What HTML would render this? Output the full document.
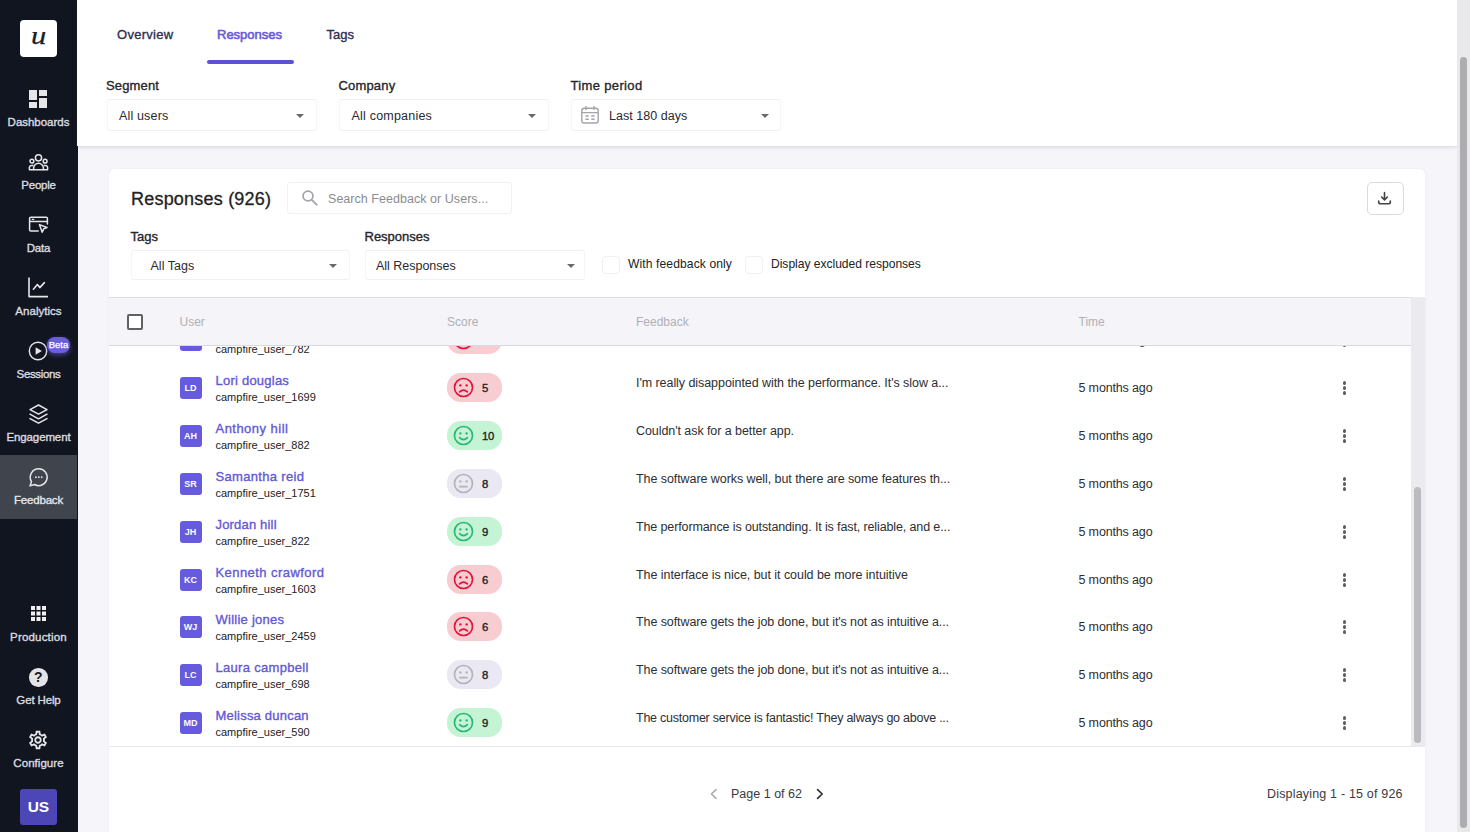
<!DOCTYPE html>
<html lang="en">
<head>
<meta charset="utf-8">
<title>Feedback - Responses</title>
<style>
*{box-sizing:border-box;margin:0;padding:0}
html,body{width:1470px;height:832px;overflow:hidden}
body{font-family:"Liberation Sans",sans-serif;background:#f5f5fa;color:#222;position:relative}
.abs{position:absolute}
/* ---------- sidebar ---------- */
#side{position:absolute;left:0;top:0;width:77.5px;height:832px;background:#10151f}
#logo{position:absolute;left:20px;top:20px;width:37px;height:37px;background:#fff;border-radius:4px}
#logo span{position:absolute;left:0;top:-3.5px;width:37px;text-align:center;font-family:"Liberation Serif",serif;font-style:italic;font-size:25px;color:#1a1d2b;-webkit-text-stroke:.25px #1a1d2b;line-height:37px;transform:scaleX(1.22)}
.nav{position:absolute;left:0;width:77px;text-align:center;color:#dcdce0;font-size:11.5px;-webkit-text-stroke:.35px #dcdce0;letter-spacing:0px;line-height:14px;white-space:nowrap}
.ico{position:absolute}
#active{position:absolute;left:0;top:455px;width:77px;height:64px;background:#3f444d}
#beta{position:absolute;left:47px;top:336.5px;width:23px;height:16px;border-radius:8px;background:#6a5fd9;color:#fff;font-size:9.5px;-webkit-text-stroke:.25px #fff;line-height:16px;text-align:center;box-shadow:0 2px 5px rgba(106,95,217,.6)}
#usr{position:absolute;left:20px;top:789px;width:36.5px;height:36px;border-radius:3px;background:#4c46b6;color:#fff;font-weight:bold;font-size:15.5px;line-height:36px;text-align:center;letter-spacing:-.3px}
/* ---------- top header ---------- */
#top{position:absolute;left:77px;top:0;width:1380px;height:146px;background:#fff;box-shadow:0 1px 4px rgba(60,60,90,.18)}
.tab{position:absolute;top:27px;font-size:13px;line-height:16px;color:#2c3050;-webkit-text-stroke:.35px #2c3050;white-space:nowrap}
.tab.on{color:#685dd8;-webkit-text-stroke:.6px #685dd8}
#ul{position:absolute;left:207px;top:60px;width:87px;height:4px;border-radius:2px;background:#5b50d6}
.lbl{position:absolute;font-size:13px;line-height:16px;color:#26262b;-webkit-text-stroke:.35px #26262b;white-space:nowrap}
.sel{position:absolute;height:32px;border:1px solid #f0f0f5;border-left-color:#f5f5f9;border-right-color:#f5f5f9;border-radius:3px;background:#fff}
.sel>span{position:absolute;top:8px;font-size:12.5px;line-height:16px;color:#2a2a2e;white-space:nowrap}
.sel b{position:absolute;top:14px;width:0;height:0;border-left:4.2px solid transparent;border-right:4.2px solid transparent;border-top:4.6px solid #6a6a6e}
/* ---------- scrollbars ---------- */
#psb{position:absolute;left:1457px;top:0;width:13px;height:832px;background:#e9e9ec}
#psb i{position:absolute;left:3px;top:57px;width:7px;height:771px;border-radius:4px;background:#adadb1}
/* ---------- card ---------- */
#card{position:absolute;left:109px;top:169px;width:1316px;height:680px;background:#fff;border-radius:6px;box-shadow:0 0 3px rgba(60,60,90,.06)}
#h1{position:absolute;left:131px;top:187px;font-size:18px;line-height:24px;color:#222;-webkit-text-stroke:.3px #222;white-space:nowrap}
#srch{position:absolute;left:287px;top:182px;width:225px;height:32px;border:1px solid #f1f1f6;border-radius:3px}
#srch>span{position:absolute;left:40px;top:8px;font-size:12.5px;line-height:16px;color:#8c8c90;white-space:nowrap}
#dl{position:absolute;left:1367px;top:182px;width:37px;height:33px;border:1px solid #d9dbe4;border-radius:5px;background:#fff}
.cb{position:absolute;top:255.5px;width:18px;height:18px;border:1px solid #efeff4;border-radius:4px;background:#fff}
.cbl{position:absolute;top:256px;font-size:12.1px;line-height:16px;color:#222;white-space:nowrap}
/* ---------- table ---------- */
#thead{position:absolute;left:109px;top:297px;width:1302px;height:49px;background:#f4f4f9;border-top:1px solid #dcdce6;border-bottom:1px solid #d9d9e2;z-index:3}
#thead>span{position:absolute;top:16px;font-size:12px;line-height:16px;color:#b0b0b6;white-space:nowrap}
#hcb{position:absolute;left:17.5px;top:16px;width:16px;height:16px;border:2px solid #606065;border-radius:2px;background:#fff}
#tsb{position:absolute;left:1411px;top:297px;width:14px;height:450px;background:#ebebef;z-index:3}
#tsb i{position:absolute;left:3px;top:190px;width:7px;height:256px;border-radius:4px;background:#bbbbbf}
#tbody{position:absolute;left:0;top:345px;width:1411px;height:402px;overflow:hidden}
#rows{position:absolute;left:0;top:-345px;width:1411px}
.row{position:absolute;left:0;width:1411px;height:48px}
.av{position:absolute;left:179.5px;top:13px;width:22px;height:22px;border-radius:3px;background:#655bdc;color:#fff;font-size:9px;font-weight:bold;line-height:22px;text-align:center}
.nm{position:absolute;left:215.5px;top:9px;font-size:13px;line-height:16px;color:#6358d4;-webkit-text-stroke:.35px #6358d4;white-space:nowrap}
.sub{position:absolute;left:215.5px;top:26px;font-size:11px;line-height:14px;color:#222;white-space:nowrap}
.pill{position:absolute;left:447px;top:8.6px;width:55.2px;height:29.7px;border-radius:13.5px}
.pill.red{background:#f8cdd1}.pill.green{background:#c4f4d3}.pill.gray{background:#e9e8f3}
.pill .face{position:absolute;left:6px;top:4.2px;width:21px;height:21px}
.pill>span{position:absolute;left:35px;top:8.6px;font-size:11.3px;line-height:15px;color:#222;-webkit-text-stroke:.35px #222;letter-spacing:-.3px}
.fb{position:absolute;left:636px;top:10.5px;font-size:12.5px;line-height:16px;color:#2e2e32;white-space:nowrap}
.tm{position:absolute;left:1078.5px;top:16px;font-size:12.5px;line-height:16px;color:#2e2e32;white-space:nowrap}
.kb{position:absolute;left:1342.7px;top:17px;width:4px}
.kb i{display:block;width:3.6px;height:3.6px;border-radius:50%;background:#606064;margin-bottom:1.6px}
#tfoot{position:absolute;left:109px;top:746px;width:1302px;height:1px;background:#e6e6ee}
.pg{position:absolute;top:786px;font-size:12.5px;line-height:16px;color:#3a3a3e;white-space:nowrap}
</style>
</head>
<body>

<!-- ================= SIDEBAR ================= -->
<div id="side">
  <div id="logo"><span>u</span></div>
  <div id="active"></div>

  <!-- Dashboards -->
  <svg class="ico" style="left:26px;top:87px" width="24" height="24" viewBox="0 0 24 24"><path fill="#e6e6ea" d="M3 13h8V3H3v10zm0 8h8v-6H3v6zm10 0h8V11h-8v10zm0-18v6h8V3h-8z"/></svg>
  <div class="nav" style="top:115px"><span style="letter-spacing:-0.02px">Dashboards</span></div>

  <!-- People -->
  <svg class="ico" style="left:28px;top:153px" width="21" height="19" viewBox="0 0 21 19" fill="none" stroke="#e6e6ea" stroke-width="1.5" stroke-linejoin="round"><circle cx="10.5" cy="4.8" r="3.1"/><circle cx="3.9" cy="8.2" r="1.9"/><circle cx="17.1" cy="8.2" r="1.9"/><path d="M5.6 16.8v-1.6a4.9 4.9 0 0 1 9.8 0v1.6z"/><path d="M5.4 12.4H3.6a2.2 2.2 0 0 0-2.2 2.2v2.2h4.2M15.6 12.4h1.8a2.2 2.2 0 0 1 2.2 2.2v2.2h-4.2"/></svg>
  <div class="nav" style="top:178px"><span style="letter-spacing:-0.22px">People</span></div>

  <!-- Data -->
  <svg class="ico" style="left:28px;top:215px" width="21" height="20" viewBox="0 0 21 20" fill="none" stroke="#e6e6ea" stroke-width="1.5" stroke-linejoin="round" stroke-linecap="round"><path d="M10.2 16H2.8a1.2 1.2 0 0 1-1.2-1.2V3.4a1.2 1.2 0 0 1 1.2-1.2h15.4a1.2 1.2 0 0 1 1.2 1.2V9"/><path d="M1.6 6.4h17.8"/><path d="M4.2 4.3h1.6" stroke-width="1.3"/><path d="M11.4 9.6l7.6 2.9-3.3 1.4-1.5 3.3z"/></svg>
  <div class="nav" style="top:241px"><span style="letter-spacing:-0.17px">Data</span></div>

  <!-- Analytics -->
  <svg class="ico" style="left:27px;top:276px" width="23" height="23" viewBox="0 0 23 23" fill="none" stroke="#e6e6ea" stroke-width="1.6" stroke-linejoin="round" stroke-linecap="round"><path d="M2 1.6v19h19" stroke-linecap="butt"/><path d="M6.4 13.2l4-4.6 2.4 3 4.6-5"/></svg>
  <div class="nav" style="top:304px"><span style="letter-spacing:0.03px">Analytics</span></div>

  <!-- Sessions -->
  <svg class="ico" style="left:28px;top:341px" width="20" height="20" viewBox="0 0 20 20"><circle cx="10" cy="10" r="8.7" fill="none" stroke="#e6e6ea" stroke-width="1.4"/><path d="M7.6 6.2v7.6l6.3-3.8z" fill="#e6e6ea"/></svg>
  <div id="beta">Beta</div>
  <div class="nav" style="top:367px"><span style="letter-spacing:-0.36px">Sessions</span></div>

  <!-- Engagement -->
  <svg class="ico" style="left:28px;top:403px" width="21" height="22" viewBox="0 0 21 22" fill="none" stroke="#e6e6ea" stroke-width="1.5" stroke-linejoin="round" stroke-linecap="round"><path d="M10.5 2L19 6.6l-8.500 4.600L2 6.600z"/><path d="M2 11.200l8.500 4.600 8.500-4.600"/><path d="M2 15.600l8.500 4.600 8.500-4.600"/></svg>
  <div class="nav" style="top:430px"><span style="letter-spacing:-0.12px">Engagement</span></div>

  <!-- Feedback -->
  <svg class="ico" style="left:28px;top:467px" width="21" height="21" viewBox="0 0 21 21" fill="none" stroke="#e6e6ea" stroke-width="1.5" stroke-linejoin="round" stroke-linecap="round"><path d="M10.8 1.8a8.400 8.400 0 1 1-4.200 15.700L2 18.900l1.500-4.300A8.400 8.400 0 0 1 10.800 1.800z"/><g fill="#e6e6ea" stroke="none"><circle cx="7.900" cy="10.200" r=".9"/><circle cx="10.800" cy="10.200" r=".9"/><circle cx="13.700" cy="10.200" r=".9"/></g></svg>
  <div class="nav" style="top:493px;color:#f4f4f6;letter-spacing:-.2px">Feedback</div>

  <!-- Production -->
  <svg class="ico" style="left:30.800px;top:606px" width="15" height="15" viewBox="0 0 15 15" fill="#f0f0f3"><rect x="0" y="0" width="4" height="4"/><rect x="5.500" y="0" width="4" height="4"/><rect x="11" y="0" width="4" height="4"/><rect x="0" y="5.500" width="4" height="4"/><rect x="5.500" y="5.500" width="4" height="4"/><rect x="11" y="5.500" width="4" height="4"/><rect x="0" y="11" width="4" height="4"/><rect x="5.500" y="11" width="4" height="4"/><rect x="11" y="11" width="4" height="4"/></svg>
  <div class="nav" style="top:630px"><span style="letter-spacing:0.19px">Production</span></div>

  <!-- Get Help -->
  <div class="ico" style="left:29px;top:668px;width:18.500px;height:18.500px;border-radius:50%;background:#e4e4e8;color:#161a25;font-weight:bold;font-size:14px;line-height:19px;text-align:center">?</div>
  <div class="nav" style="top:693px"><span style="letter-spacing:-0.14px">Get Help</span></div>

  <!-- Configure -->
  <svg class="ico" style="left:27.2px;top:729px" width="22" height="22" viewBox="0 0 24 24"><path fill="#e6e6ea" d="M19.430 12.980c.040-.320.070-.640.070-.980s-.030-.660-.070-.980l2.110-1.650c.190-.150.240-.420.120-.640l-2-3.460c-.090-.160-.260-.250-.440-.250-.060 0-.120.010-.170.030l-2.490 1c-.520-.400-1.080-.730-1.690-.980l-.380-2.650C14.460 2.180 14.250 2 14 2h-4c-.250 0-.460.180-.490.420l-.380 2.650c-.610.250-1.170.590-1.690.980l-2.490-1c-.060-.020-.120-.030-.180-.030-.170 0-.340.090-.430.250l-2 3.460c-.130.220-.070.490.12.640l2.110 1.650c-.040.320-.070.650-.070.980s.030.660.070.980l-2.110 1.650c-.190.150-.240.420-.120.640l2 3.460c.090.160.260.250.440.250.060 0 .12-.010.170-.030l2.490-1c.520.400 1.080.730 1.690.980l.380 2.650c.030.240.240.420.490.420h4c.250 0 .460-.180.490-.420l.380-2.650c.610-.250 1.170-.590 1.690-.980l2.490 1c.060.020.120.030.180.030.170 0 .340-.090.430-.250l2-3.460c.120-.220.070-.490-.12-.640l-2.110-1.650zm-1.980-1.710c.040.310.050.520.050.730 0 .210-.020.430-.050.730l-.140 1.130.890.700 1.080.840-.700 1.210-1.270-.510-1.040-.420-.900.680c-.430.320-.840.560-1.250.730l-1.060.430-.160 1.130-.200 1.350h-1.400l-.190-1.350-.160-1.130-1.060-.430c-.430-.180-.830-.410-1.230-.710l-.910-.700-1.060.430-1.270.510-.700-1.210 1.080-.840.890-.700-.140-1.130c-.030-.310-.050-.540-.050-.740s.020-.430.050-.730l.140-1.130-.890-.700-1.080-.840.700-1.210 1.270.510 1.040.420.900-.680c.430-.320.840-.560 1.250-.730l1.060-.430.160-1.130.200-1.350h1.390l.190 1.350.160 1.130 1.060.430c.430.180.830.410 1.230.710l.910.700 1.060-.430 1.270-.510.700 1.210-1.070.850-.890.700.140 1.130zM12 8c-2.210 0-4 1.790-4 4s1.790 4 4 4 4-1.790 4-4-1.790-4-4-4zm0 6c-1.100 0-2-.900-2-2s.900-2 2-2 2 .900 2 2-.900 2-2 2z"/></svg>
  <div class="nav" style="top:756px"><span style="letter-spacing:0.05px">Configure</span></div>

  <div id="usr">US</div>
</div>

<!-- ================= TOP HEADER ================= -->
<div id="top"></div>
<div class="tab" style="left:117px"><span style="letter-spacing:0.28px">Overview</span></div>
<div class="tab on" style="left:217px">Responses</div>
<div class="tab" style="left:326.500px">Tags</div>
<div id="ul"></div>

<div class="lbl" style="left:106px;top:78px"><span style="letter-spacing:0.15px">Segment</span></div>
<div class="lbl" style="left:338.500px;top:78px"><span style="letter-spacing:0.17px">Company</span></div>
<div class="lbl" style="left:570.500px;top:78px"><span style="letter-spacing:0.35px">Time period</span></div>

<div class="sel" style="left:107px;top:99px;width:210px"><span style="left:11px"><span style="letter-spacing:0.16px">All users</span></span><b style="left:188px"></b></div>
<div class="sel" style="left:338.500px;top:99px;width:210px"><span style="left:12px"><span style="letter-spacing:0.21px">All companies</span></span><b style="left:188.500px"></b></div>
<div class="sel" style="left:570.500px;top:99px;width:210px"><svg class="abs" style="left:8.7px;top:5.4px" width="20" height="20" viewBox="0 0 20 20" fill="none" stroke="#a4a4aa" stroke-width="1.4" stroke-linecap="round"><rect x="1.800" y="3.200" width="16.400" height="14.800" rx="2.600"/><path d="M1.800 7.600h16.400M6 1.400v3.200M14 1.400v3.200"/><path d="M6 11h2.200M11.800 11H14M6 14.200h2.200M11.800 14.200H14" stroke-width="1.500"/></svg><span style="left:37.500px"><span style="letter-spacing:0.03px">Last 180 days</span></span><b style="left:189px"></b></div>

<!-- page scrollbar -->
<div id="psb"><i></i></div>

<!-- ================= CARD ================= -->
<div id="card"></div>
<div id="h1"><span style="letter-spacing:0.21px">Responses (926)</span></div>
<div id="srch"><svg class="abs" style="left:13px;top:6px" width="18" height="18" viewBox="0 0 18 18" fill="none" stroke="#a2a2a8" stroke-width="1.700" stroke-linecap="round"><circle cx="7" cy="7" r="4.900"/><path d="M10.800 10.800l5 5"/></svg><span><span style="letter-spacing:0.04px">Search Feedback or Users...</span></span></div>
<div id="dl"><svg class="abs" style="left:9.4px;top:8.2px" width="15" height="15" viewBox="0 0 16 16" fill="none" stroke="#444448" stroke-width="1.700" stroke-linecap="round" stroke-linejoin="round"><path d="M8 1.600v7.600M4.900 6.400L8 9.500l3.100-3.100"/><path d="M1.800 10.600v1a2 2 0 0 0 2 2h8.400a2 2 0 0 0 2-2v-1"/></svg></div>

<div class="lbl" style="left:130.500px;top:229px">Tags</div>
<div class="lbl" style="left:364.500px;top:229px">Responses</div>
<div class="sel" style="left:131px;top:250px;width:218.500px;height:30px"><span style="left:18.500px;top:7px"><span style="letter-spacing:0.03px">All Tags</span></span><b style="left:197px;top:13px"></b></div>
<div class="sel" style="left:364.500px;top:250px;width:220px;height:30px"><span style="left:10.500px;top:7px"><span style="letter-spacing:-0.02px">All Responses</span></span><b style="left:201.500px;top:13px"></b></div>

<div class="cb" style="left:602px"></div>
<div class="cbl" style="left:628px"><span style="letter-spacing:0.10px">With feedback only</span></div>
<div class="cb" style="left:744.500px"></div>
<div class="cbl" style="left:771px"><span style="letter-spacing:-0.03px">Display excluded responses</span></div>

<!-- ================= TABLE ================= -->
<div id="thead">
  <div id="hcb"></div>
  <span style="left:70.500px">User</span>
  <span style="left:338px">Score</span>
  <span style="left:527px">Feedback</span>
  <span style="left:969.500px">Time</span>
</div>
<div id="tsb"><i></i></div>

<div id="tbody"><div id="rows">
<div class="row" style="top:316px">
<div class="av"></div>
<div class="sub">campfire_user_782</div>
<div class="pill red"><svg class="face" viewBox="0 0 20 20"><circle cx="10" cy="10" r="8.6" fill="none" stroke="#e1143c" stroke-width="1.6"/><circle cx="7" cy="8" r="1.15" fill="#e1143c"/><circle cx="13" cy="8" r="1.15" fill="#e1143c"/><path d="M6.3 14.2 Q10 10.6 13.7 14.2" fill="none" stroke="#e1143c" stroke-width="1.6" stroke-linecap="round"/></svg><span></span></div>
<div class="tm"><span style="letter-spacing:-0.15px">5 months ago</span></div>
<div class="kb"><i></i><i></i><i></i></div>
</div>
<div class="row" style="top:364px">
<div class="av">LD</div>
<div class="nm"><span style="letter-spacing:0.23px">Lori douglas</span></div>
<div class="sub">campfire_user_1699</div>
<div class="pill red"><svg class="face" viewBox="0 0 20 20"><circle cx="10" cy="10" r="8.6" fill="none" stroke="#e1143c" stroke-width="1.6"/><circle cx="7" cy="8" r="1.15" fill="#e1143c"/><circle cx="13" cy="8" r="1.15" fill="#e1143c"/><path d="M6.3 14.2 Q10 10.6 13.7 14.2" fill="none" stroke="#e1143c" stroke-width="1.6" stroke-linecap="round"/></svg><span>5</span></div>
<div class="fb"><span style="letter-spacing:-0.06px">I'm really disappointed with the performance. It's slow a...</span></div>
<div class="tm"><span style="letter-spacing:-0.15px">5 months ago</span></div>
<div class="kb"><i></i><i></i><i></i></div>
</div>
<div class="row" style="top:412px">
<div class="av">AH</div>
<div class="nm"><span style="letter-spacing:0.47px">Anthony hill</span></div>
<div class="sub">campfire_user_882</div>
<div class="pill green"><svg class="face" viewBox="0 0 20 20"><circle cx="10" cy="10" r="8.6" fill="none" stroke="#27b877" stroke-width="1.6"/><circle cx="7" cy="8" r="1.15" fill="#27b877"/><circle cx="13" cy="8" r="1.15" fill="#27b877"/><path d="M6.3 12 Q10 15.8 13.7 12" fill="none" stroke="#27b877" stroke-width="1.6" stroke-linecap="round"/></svg><span>10</span></div>
<div class="fb"><span style="letter-spacing:-0.07px">Couldn't ask for a better app.</span></div>
<div class="tm"><span style="letter-spacing:-0.15px">5 months ago</span></div>
<div class="kb"><i></i><i></i><i></i></div>
</div>
<div class="row" style="top:460px">
<div class="av">SR</div>
<div class="nm"><span style="letter-spacing:0.32px">Samantha reid</span></div>
<div class="sub">campfire_user_1751</div>
<div class="pill gray"><svg class="face" viewBox="0 0 20 20"><circle cx="10" cy="10" r="8.6" fill="none" stroke="#b4b4b8" stroke-width="1.6"/><circle cx="7" cy="8" r="1.15" fill="#b4b4b8"/><circle cx="13" cy="8" r="1.15" fill="#b4b4b8"/><path d="M6.6 13 H13.4" fill="none" stroke="#b4b4b8" stroke-width="1.6" stroke-linecap="round"/></svg><span>8</span></div>
<div class="fb"><span style="letter-spacing:-0.07px">The software works well, but there are some features th...</span></div>
<div class="tm"><span style="letter-spacing:-0.15px">5 months ago</span></div>
<div class="kb"><i></i><i></i><i></i></div>
</div>
<div class="row" style="top:508px">
<div class="av">JH</div>
<div class="nm"><span style="letter-spacing:0.18px">Jordan hill</span></div>
<div class="sub">campfire_user_822</div>
<div class="pill green"><svg class="face" viewBox="0 0 20 20"><circle cx="10" cy="10" r="8.6" fill="none" stroke="#27b877" stroke-width="1.6"/><circle cx="7" cy="8" r="1.15" fill="#27b877"/><circle cx="13" cy="8" r="1.15" fill="#27b877"/><path d="M6.3 12 Q10 15.8 13.7 12" fill="none" stroke="#27b877" stroke-width="1.6" stroke-linecap="round"/></svg><span>9</span></div>
<div class="fb"><span style="letter-spacing:-0.12px">The performance is outstanding. It is fast, reliable, and e...</span></div>
<div class="tm"><span style="letter-spacing:-0.15px">5 months ago</span></div>
<div class="kb"><i></i><i></i><i></i></div>
</div>
<div class="row" style="top:556px">
<div class="av">KC</div>
<div class="nm"><span style="letter-spacing:0.44px">Kenneth crawford</span></div>
<div class="sub">campfire_user_1603</div>
<div class="pill red"><svg class="face" viewBox="0 0 20 20"><circle cx="10" cy="10" r="8.6" fill="none" stroke="#e1143c" stroke-width="1.6"/><circle cx="7" cy="8" r="1.15" fill="#e1143c"/><circle cx="13" cy="8" r="1.15" fill="#e1143c"/><path d="M6.3 14.2 Q10 10.6 13.7 14.2" fill="none" stroke="#e1143c" stroke-width="1.6" stroke-linecap="round"/></svg><span>6</span></div>
<div class="fb"><span style="letter-spacing:-0.05px">The interface is nice, but it could be more intuitive</span></div>
<div class="tm"><span style="letter-spacing:-0.15px">5 months ago</span></div>
<div class="kb"><i></i><i></i><i></i></div>
</div>
<div class="row" style="top:603px">
<div class="av">WJ</div>
<div class="nm"><span style="letter-spacing:0.25px">Willie jones</span></div>
<div class="sub">campfire_user_2459</div>
<div class="pill red"><svg class="face" viewBox="0 0 20 20"><circle cx="10" cy="10" r="8.6" fill="none" stroke="#e1143c" stroke-width="1.6"/><circle cx="7" cy="8" r="1.15" fill="#e1143c"/><circle cx="13" cy="8" r="1.15" fill="#e1143c"/><path d="M6.3 14.2 Q10 10.6 13.7 14.2" fill="none" stroke="#e1143c" stroke-width="1.6" stroke-linecap="round"/></svg><span>6</span></div>
<div class="fb"><span style="letter-spacing:-0.09px">The software gets the job done, but it's not as intuitive a...</span></div>
<div class="tm"><span style="letter-spacing:-0.15px">5 months ago</span></div>
<div class="kb"><i></i><i></i><i></i></div>
</div>
<div class="row" style="top:651px">
<div class="av">LC</div>
<div class="nm"><span style="letter-spacing:0.31px">Laura campbell</span></div>
<div class="sub">campfire_user_698</div>
<div class="pill gray"><svg class="face" viewBox="0 0 20 20"><circle cx="10" cy="10" r="8.6" fill="none" stroke="#b4b4b8" stroke-width="1.6"/><circle cx="7" cy="8" r="1.15" fill="#b4b4b8"/><circle cx="13" cy="8" r="1.15" fill="#b4b4b8"/><path d="M6.6 13 H13.4" fill="none" stroke="#b4b4b8" stroke-width="1.6" stroke-linecap="round"/></svg><span>8</span></div>
<div class="fb"><span style="letter-spacing:-0.09px">The software gets the job done, but it's not as intuitive a...</span></div>
<div class="tm"><span style="letter-spacing:-0.15px">5 months ago</span></div>
<div class="kb"><i></i><i></i><i></i></div>
</div>
<div class="row" style="top:699px">
<div class="av">MD</div>
<div class="nm"><span style="letter-spacing:0.21px">Melissa duncan</span></div>
<div class="sub">campfire_user_590</div>
<div class="pill green"><svg class="face" viewBox="0 0 20 20"><circle cx="10" cy="10" r="8.6" fill="none" stroke="#27b877" stroke-width="1.6"/><circle cx="7" cy="8" r="1.15" fill="#27b877"/><circle cx="13" cy="8" r="1.15" fill="#27b877"/><path d="M6.3 12 Q10 15.8 13.7 12" fill="none" stroke="#27b877" stroke-width="1.6" stroke-linecap="round"/></svg><span>9</span></div>
<div class="fb"><span style="letter-spacing:-0.24px">The customer service is fantastic! They always go above ...</span></div>
<div class="tm"><span style="letter-spacing:-0.15px">5 months ago</span></div>
<div class="kb"><i></i><i></i><i></i></div>
</div>
</div></div>
<div id="tfoot"></div>

<!-- pagination -->
<svg class="abs" style="left:709px;top:788px" width="10" height="12" viewBox="0 0 10 12" fill="none" stroke="#a9a9ae" stroke-width="1.500" stroke-linecap="round" stroke-linejoin="round"><path d="M7 1.600L2.400 6 7 10.400"/></svg>
<div class="pg" style="left:731px"><span style="letter-spacing:0.01px">Page 1 of 62</span></div>
<svg class="abs" style="left:815px;top:788px" width="10" height="12" viewBox="0 0 10 12" fill="none" stroke="#333338" stroke-width="1.700" stroke-linecap="round" stroke-linejoin="round"><path d="M2.600 1.600L7.200 6 2.600 10.400"/></svg>
<div class="pg" style="left:1267px"><span style="letter-spacing:0.18px">Displaying 1 - 15 of 926</span></div>

</body>
</html>
